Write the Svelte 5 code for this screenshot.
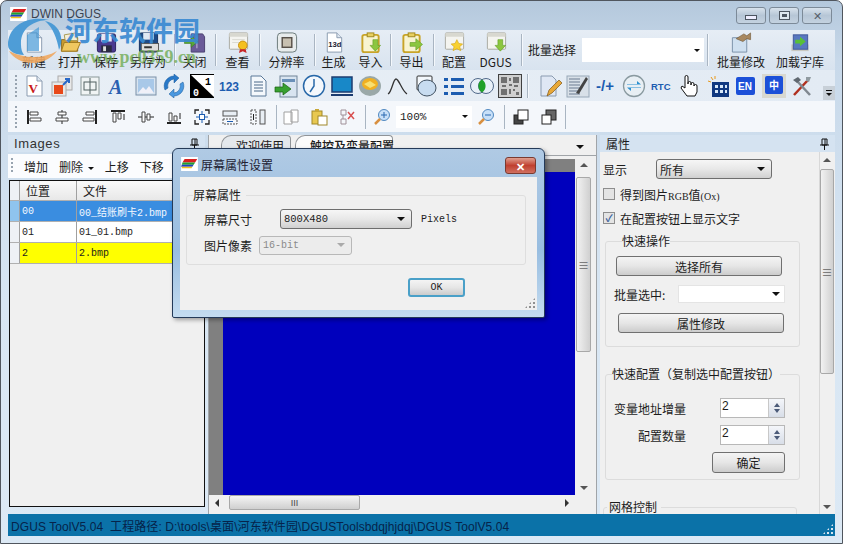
<script>
  const doc = (x = '') => `<path d="M5 2h10l5 5v15H5z" fill="#fff" stroke="#8a9bb0"/><path d="M15 2v5h5" fill="#dfe7f0" stroke="#8a9bb0"/>${x}`;
  const win = (x = '') => `<rect x="3" y="2" width="19" height="17" rx="1" fill="#f4f4f0" stroke="#a8a8a0"/><rect x="3" y="2" width="19" height="4" fill="#d8d8d0"/>${x}`;
  const clip = (x = '') => `<rect x="3" y="4" width="17" height="18" rx="2" fill="#f8f4d0" stroke="#c8a428" stroke-width="2"/><rect x="8" y="2" width="7" height="4" fill="#e8d060" stroke="#a08820"/>${x}`;
  const downArrow = '<path d="M14 9h5v6h3l-5.5 6-5.5-6h3z" fill="#8cc63f" stroke="#5a9a20" stroke-width=".6"/>';
  const lines = (x, y, n, w, c = '#8a9bb0') => Array.from({ length: n }, (_, i) => `<path d="M${x} ${y + i * 3}h${w}" stroke="${c}"/>`).join('');

  const icons = {
    new: doc(),
    open: '<path d="M3 9h7l2-2h8v14H3z" fill="#c89a30" stroke="#8a6a20"/><path d="M6 4l12-2 2 8H7z" fill="#f4f0d8" stroke="#a89850"/><path d="M3 21l3-9h17l-4 9z" fill="#f0c860" stroke="#a07a20"/>',
    save: '<rect x="3" y="3" width="19" height="19" rx="2" fill="#4a3a90" stroke="#2a2060"/><rect x="7" y="3" width="11" height="8" fill="#e8e8f4"/><rect x="7" y="15" width="11" height="7" fill="#2a2a40"/><rect x="9" y="16" width="3" height="5" fill="#ddd"/>',
    saveas: '<rect x="3" y="2" width="19" height="20" rx="2" fill="#1c4a88" stroke="#143060"/><rect x="7" y="2" width="11" height="7" fill="#dfe8f4"/><rect x="5" y="13" width="18" height="8" fill="#ddd" stroke="#555"/><path d="M8 17h8" stroke="#333" stroke-width="2"/>',
    close: '<path d="M8 3h12l2 3v16H8z" fill="#6a5a98" stroke="#4a4070"/><path d="M14 6v12" stroke="#c8c0e0"/><path d="M1 9h7V5l7 6-7 6v-4H1z" fill="#58a838" stroke="#387820" stroke-width=".6"/>',
    view: win('<path d="M6 9h13M6 12h9" stroke="#d8d8d0"/><circle cx="17" cy="15" r="4.5" fill="#f4c020" stroke="#c89010"/><path d="M14 19l-1 4 4-2 4 2-1-4z" fill="#c82828"/>'),
    res: '<rect x="2" y="2" width="20" height="20" rx="4" fill="#e8ecec" stroke="#687878"/><rect x="7" y="7" width="10" height="10" fill="#c8c0b0" stroke="#585048" stroke-width="1.5"/>',
    gen: doc('<text x="6" y="17" font-size="8" font-weight="700" font-family="Liberation Sans" fill="#223">13d</text>'),
    imp: clip(downArrow),
    exp: clip('<path d="M10 12h6V8l7 6-7 6v-4h-6z" fill="#8cc63f" stroke="#5a9a20" stroke-width=".6"/>'),
    cfg: win('<path d="M15 9l2 4 4 .5-3 3 1 4-4-2-4 2 1-4-3-3 4-.5z" fill="#f8d030" stroke="#d0a010" stroke-width=".6"/>'),
    dgus: win(downArrow),
    batch: '<path d="M3 7h15v15H3z" fill="#cfe0f0" stroke="#7a90a8"/><path d="M7 8l8-5 3 2 4-3v7l-4-1-4 3z" fill="#a88860" stroke="#685030" stroke-width=".6"/>',
    font: '<rect x="3" y="14" width="18" height="7" fill="#c8c8c0"/><rect x="5" y="4" width="15" height="15" fill="#5878c0" stroke="#405898"/><path d="M7 9h5V6l6 5-6 5v-3H7z" fill="#58c038"/>',

    vdoc: doc('<text x="6.5" y="19" font-size="13" font-weight="700" font-family="Liberation Serif" fill="#c81818">V</text>'),
    swap: '<rect x="8" y="2" width="14" height="14" fill="#e8e8e8" stroke="#aaa"/><rect x="2" y="8" width="14" height="14" fill="#e8e8e8" stroke="#aaa"/><rect x="4" y="11" width="9" height="9" fill="#e84818"/><path d="M13 11l6-6M15 5h4v4" stroke="#2868c8" stroke-width="2" fill="none"/>',
    box: '<rect x="3" y="3" width="18" height="18" fill="#f0f4f4" stroke="#8a9898"/><rect x="6" y="8" width="12" height="8" fill="none" stroke="#506060"/><path d="M12 4v16" stroke="#506060"/>',
    a: '<text x="3" y="20" font-size="20" font-weight="700" font-style="italic" font-family="Liberation Serif" fill="#2a60b0">A</text>',
    pic: '<rect x="2" y="3" width="20" height="18" fill="#d8e4f0" stroke="#7a90a8"/><rect x="4" y="5" width="16" height="14" fill="#a8c8e8"/><path d="M4 19l5-6 3 3 3-4 5 7z" fill="#f0f0f8"/>',
    refresh: '<path d="M12 2a10 10 0 0 0-9 14l3-2a7 7 0 0 1 6-9V9l5-5-5-4z" fill="#2878c8" stroke="#185898" stroke-width=".5"/><path d="M12 22a10 10 0 0 0 9-14l-3 2a7 7 0 0 1-6 9v-4l-5 5 5 4z" fill="#4a98e0" stroke="#185898" stroke-width=".5"/>',
    bits: '<rect x="0" y="0" width="24" height="24" fill="#000"/><path d="M1 1h23v22z" fill="#fff"/><text x="15" y="11" font-size="10" font-weight="700" font-family="Liberation Mono" fill="#000">1</text><text x="3" y="22" font-size="10" font-weight="700" font-family="Liberation Mono" fill="#fff">0</text>',
    n123: '<text x="1" y="17" font-size="12" font-weight="700" font-family="Liberation Sans" fill="#1c5cb0">123</text>',
    lines: `<path d="M5 2h10l5 5v15H5z" fill="#f4f8fc" stroke="#5a7898"/>${lines(8, 8, 4, 9, '#4a6888')}`,
    docarrow: '<rect x="6" y="2" width="17" height="21" fill="#d8e4f0" stroke="#708498"/><rect x="8" y="5" width="13" height="3" fill="#6a90b8"/><path d="M1 13h8V9l8 6-8 6v-3H1z" fill="#38a030" stroke="#186010" stroke-width=".7"/>',
    clock: '<circle cx="12" cy="12" r="10.5" fill="#f4f8fc" stroke="#2868a8" stroke-width="1.5"/><path d="M12 5v7l-4 6" fill="none" stroke="#2868a8" stroke-width="1.5"/>',
    monitor: '<rect x="2" y="3" width="20" height="15" fill="#1888c8" stroke="#1c3c70" stroke-width="1.5"/><path d="M1 21h22" stroke="#1c3c70" stroke-width="2"/>',
    orb: '<ellipse cx="12" cy="12" rx="11" ry="10" fill="#9aa8a8"/><ellipse cx="12" cy="10" rx="8" ry="6" fill="#f0b020"/><path d="M6 10l6-3 6 4-6 3z" fill="#f8e070"/>',
    curve: '<path d="M2 20C6 18 7 5 10 5s6 12 11 15" fill="none" stroke="#333" stroke-width="1.3"/>',
    shape: '<rect x="3" y="2" width="15" height="14" rx="1" fill="#f4f8fc" stroke="#333"/><ellipse cx="13" cy="14" rx="9" ry="8" fill="#c8dcf0" stroke="#405060"/>',
    list: '<path d="M2 4h4v3H2zM2 11h4v3H2zM2 18h4v3H2zM9 4h13v3H9zM9 11h13v3H9zM9 18h13v3H9z" fill="#1c5cb0"/>',
    venn: '<circle cx="8" cy="12" r="7.5" fill="#e8f0f8" stroke="#506888"/><circle cx="16" cy="12" r="7.5" fill="#e8f0f8" stroke="#506888"/><path d="M12 5.600a7.500 7.500 0 0 1 0 12.800 7.500 7.500 0 0 1 0-12.800z" fill="#20a028"/>',
    qr: '<rect x="0" y="0" width="24" height="24" fill="#d0d0d0" stroke="#404040" stroke-width="2"/><path d="M3 3h6v6H3zM15 3h6v6h-6zM3 15h6v6H3zM11 4h2v3h-2zM11 10h3v2h-3zM16 11h4v2h-4zM4 11h4v2H4zM11 15h2v5h-2zM15 15h2v2h-2zM18 18h3v3h-3z" fill="#707070"/>',
    penDoc: '<path d="M3 2h11l4 4v16H3z" fill="#dfe7f4" stroke="#8a9bb0"/><path d="M9 22l2-6L21 6l3 3-10 10z" fill="#e8a838" stroke="#805818" stroke-width=".7"/>',
    check: `<rect x="1" y="2" width="22" height="21" fill="#d8e0e8" stroke="#98a8b8"/>${lines(3, 5, 6, 11, '#6a7a90')}<path d="M10 19L20 3l2 2-9 15z" fill="#444"/>`,
    plus: '<text x="2" y="17" font-size="15" font-weight="700" font-family="Liberation Sans" fill="#1c5cb0">-/+</text>',
    circ: '<circle cx="12" cy="12" r="10.5" fill="#e8eff4" stroke="#8a9aa0" stroke-width="1.3"/><path d="M5 10h10V7l4 3.5H5zM19 14H9v3l-4-3.5h14z" fill="#2a90d0"/>',
    rtc: '<text x="1" y="16" font-size="9.5" font-weight="700" font-family="Liberation Sans" fill="#1c5cb0">RTC</text>',
    hand: '<path d="M9 22l-6-8 1-2 3 2V3a1.500 1.500 0 0 1 3 0v7-1a1.500 1.500 0 0 1 3 0v2-1a1.500 1.500 0 0 1 3 0v2a1.500 1.500 0 0 1 3 0v6l-2 4z" fill="#fff" stroke="#111"/>',
    grid: '<path d="M5 3l2 3M2 7l3 1M9 2v3" stroke="#e89818"/><rect x="6" y="8" width="17" height="15" fill="#103880"/><path d="M9 11h3v3H9zM14 11h3v3h-3zM19 11h2v3h-2zM9 16h3v3H9zM14 16h3v3h-3zM19 16h2v3h-2z" fill="#d8e8f8"/>',
    en: '<rect x="2" y="3" width="19" height="18" rx="2" fill="#1c50d8"/><text x="4" y="16" font-size="10" font-weight="700" font-family="Liberation Sans" fill="#fff">EN</text>',
    zh: '<rect x="0" y="0" width="24" height="24" fill="#d8d8d0"/><rect x="3" y="2" width="18" height="18" rx="2" fill="#1c50d8"/><text x="7" y="15" font-size="10" font-weight="700" font-family="Noto Sans CJK SC" fill="#fff">中</text>',
    tools: '<path d="M4 21L18 6" stroke="#b03020" stroke-width="2.5"/><path d="M20 21L7 7" stroke="#808890" stroke-width="2.5"/><path d="M3 6l5-3 3 3-4 3z" fill="#606870"/><path d="M16 3h5l-2 5-3-1z" fill="#909aa0"/>',

    alignL: '<path d="M3 2v14" stroke="#222" stroke-width="2"/><path d="M5 4h8v3H5zM5 10h11v3H5z" fill="#fff" stroke="#444"/>',
    alignC: '<path d="M9 2v14" stroke="#222"/><path d="M5 4h8v3H5zM3 10h12v3H3z" fill="#fff" stroke="#444"/>',
    alignR: '<path d="M15 2v14" stroke="#222" stroke-width="2"/><path d="M5 4h8v3H5zM2 10h11v3H2z" fill="#fff" stroke="#444"/>',
    alignT: '<path d="M2 3h14" stroke="#222" stroke-width="2"/><path d="M4 5h3v9H4zM9 5h3v6H9z" fill="#fff" stroke="#444"/><path d="M15 12V6" stroke="#222"/>',
    alignM: '<path d="M1 9h16" stroke="#222"/><path d="M5 4h3v10H5zM10 6h3v6h-3z" fill="#fff" stroke="#444"/>',
    alignB: '<path d="M2 15h14" stroke="#222" stroke-width="2"/><path d="M4 5h3v8H4zM9 8h3v5H9z" fill="#fff" stroke="#444"/><path d="M15 5v6" stroke="#222"/>',
    center: '<path d="M2 6V2h4M12 2h4v4M16 12v4h-4M6 16H2v-4" fill="none" stroke="#222" stroke-width="1.3"/><rect x="6.5" y="6.5" width="5" height="5" fill="#fff" stroke="#1c5cb0"/><path d="M9 3v3M9 12v3M3 9h3M12 9h3" stroke="#1c5cb0"/>',
    spreadH: '<rect x="2" y="3" width="14" height="5" fill="#e8eef4" stroke="#555"/><path d="M2 11h14v5H2z" fill="none" stroke="#555" stroke-dasharray="2 1"/><path d="M6 13.5h6" stroke="#1c5cb0"/>',
    spreadV: '<rect x="11" y="2" width="5" height="14" fill="#e8eef4" stroke="#555"/><path d="M2 2h5v14H2z" fill="none" stroke="#555" stroke-dasharray="2 1"/><path d="M4.5 6v6" stroke="#222"/>',
    copy: '<path d="M2 4h8v12H2zM9 2h7v12H9z" fill="#fff" stroke="#a0a0a0"/>',
    paste: '<rect x="2" y="3" width="10" height="13" fill="#e8c850" stroke="#a08828"/><rect x="5" y="1" width="4" height="3" fill="#c8a838"/><rect x="8" y="8" width="9" height="9" fill="#fff" stroke="#a08828"/>',
    del: '<path d="M3 2h5v5H3zM3 11h5v5H3zM5 7v4" fill="none" stroke="#a09098"/><path d="M10 4l6 7M16 4l-6 7" stroke="#d85050" stroke-width="1.5"/>',
    zoomIn: '<circle cx="11" cy="7" r="5.5" fill="#c8e0f8" stroke="#5088c0"/><path d="M8 7h6M11 4v6" stroke="#2868b0"/><path d="M7 11l-5 5" stroke="#d89040" stroke-width="2.5"/>',
    zoomOut: '<circle cx="11" cy="7" r="5.5" fill="#c8e0f8" stroke="#5088c0"/><path d="M8 7h6" stroke="#2868b0"/><path d="M7 11l-5 5" stroke="#d89040" stroke-width="2.5"/>',
    front: '<rect x="2" y="7" width="9" height="9" fill="#444" stroke="#222"/><rect x="6" y="2" width="10" height="10" fill="#fff" stroke="#222"/>',
    back: '<rect x="6" y="2" width="10" height="10" fill="#666" stroke="#222"/><rect x="2" y="7" width="9" height="9" fill="#fff" stroke="#222"/>'
  };

  const logo = '<rect width="24" height="20" fill="#fff"/><path d="M5 3h18l-3 5H2z" fill="#d82020"/><path d="M2 8h18l-2 3H1z" fill="#20a030"/><path d="M1 11h17l-2 3H0z" fill="#2040c0"/><path d="M1 14h15l-1 2H1z" fill="#f0c020"/>';

  const row1a = [
    ['新建', 'new', 36], ['打开', 'open', 36], ['保存', 'save', 36], ['另存为', 'saveas', 48], 3,
    ['关闭', 'close', 37], 3, ['查看', 'view', 41], 1, ['分辨率', 'res', 53], 1, ['生成', 'gen', 37], ['导入', 'imp', 37], 2,
    ['导出', 'exp', 39], 3, ['配置', 'cfg', 38], ['DGUS', 'dgus', 45], 6
  ];
  const row2a = ['vdoc', 'swap', 'box', 'a', 'pic', 'refresh', 'bits', 'n123', 'lines', 'docarrow', 'clock', 'monitor', 'orb', 'curve', 'shape', 'list', 'venn', 'qr'];
  const row2b = ['penDoc', 'check', 'plus', 'circ', 'rtc', 'hand', 'grid', 'en', 'zh', 'tools'];
  const row3a = ['alignL', 'alignC', 'alignR', 'alignT', 'alignM', 'alignB', 'center', 'spreadH', 'spreadV'];
  const row3b = ['copy', 'paste', 'del'];

  const rows = [
    { pos: '00', file: '00_结账刷卡2.bmp', cls: 'sel' },
    { pos: '01', file: '01_01.bmp', cls: 'plain' },
    { pos: '2', file: '2.bmp', cls: 'warn' }
  ];
</script>

{#snippet icon(name, size = 24)}
  <svg width={size} height={size} viewBox="0 0 {size} {size}">{@html icons[name]}</svg>
{/snippet}

{#snippet tool(name)}
  <span class="tool">{@render icon(name, 24)}</span>
{/snippet}

{#snippet small(name)}
  <span class="tool">{@render icon(name, 18)}</span>
{/snippet}

{#snippet pin()}
  <svg class="pin" width="9" height="12" viewBox="0 0 9 12"><path d="M2 1h5v6H2zM0 7h9M4.5 7v5M5 1v6" fill="none" stroke="#111"/></svg>
{/snippet}

{#snippet spin(val)}
  <div class="spin">
    <span class="spin-val">{val}</span>
    <span class="spin-btns"><i class="up"></i><i class="down"></i></span>
  </div>
{/snippet}

<div class="window">
  <header class="title">
    <svg width="17" height="14" viewBox="0 0 24 20">{@html logo}</svg>
    <span class="title-text">DWIN DGUS</span>
    <div class="controls">
      <span class="ctl"><i class="min"></i></span>
      <span class="ctl"><i class="max"></i></span>
      <span class="ctl x">✕</span>
    </div>
  </header>

  <div class="bar bar1">
    {#each row1a as it}
      {#if typeof it === 'number'}
        <span class="sep" style="margin:0 {it / 2}px"></span>
      {:else}
        <div class="big" style="width:{it[2]}px">
          {@render icon(it[1], 24)}
          <span>{it[0]}</span>
        </div>
      {/if}
    {/each}
    <span class="batch-label">批量选择</span>
    <div class="batch-combo"><i class="arrow"></i></div>
    <span class="sep" style="margin:0 3px"></span>
    <div class="big" style="width:60px">{@render icon('batch', 24)}<span>批量修改</span></div>
    <div class="big" style="width:58px">{@render icon('font', 24)}<span>加载字库</span></div>
  </div>

  <div class="bar bar2">
    <span class="grip"></span>
    {#each row2a as n}{@render tool(n)}{/each}
    <span class="sep tall m2"></span>
    {#each row2b as n}{@render tool(n)}{/each}
    <span class="chev"><i></i><i class="arrow"></i></span>
  </div>

  <div class="bar bar3">
    <span class="grip"></span>
    {#each row3a as n}{@render small(n)}{/each}
    <span class="sep tall m3"></span>
    {#each row3b as n}{@render small(n)}{/each}
    <span class="sep tall m3 pad"></span>
    {@render small('zoomIn')}
    <div class="zoom-combo"><span>100%</span><i class="arrow"></i></div>
    {@render small('zoomOut')}
    <span class="sep tall m3 pad"></span>
    {@render small('front')}
    {@render small('back')}
    <span class="sep tall end"></span>
  </div>

  <div class="body">
    <section class="pane left">
      <div class="pane-head"><span class="images">Images</span>{@render pin()}</div>
      <div class="left-tools">
        <span class="grip short"></span>
        <span>增加</span>
        <span>删除 <i class="arrow tiny"></i></span>
        <span>上移</span>
        <span>下移</span>
      </div>
      <div class="grid">
        <div class="grid-row head">
          <span class="gutter"></span><span class="pos">位置</span><span class="file">文件</span>
        </div>
        {#each rows as r}
          <div class="grid-row {r.cls}">
            <span class="gutter"></span><span class="pos">{r.pos}</span><span class="file">{r.file}</span>
          </div>
        {/each}
      </div>
    </section>

    <section class="pane center">
      <div class="tabs">
        <span class="tab">欢迎使用</span>
        <span class="tab on">触控及变量配置</span>
        <i class="arrow tab-arrow"></i>
      </div>
      <div class="stage">
        <div class="canvas-col">
          <div class="ruler"></div>
          <div class="canvas-row">
            <div class="ruler-v"></div>
            <div class="canvas"></div>
          </div>
        </div>
        <div class="vscroll">
          <i class="sa up"></i>
          <span class="thumb"><b>≡</b></span>
          <i class="sa down"></i>
        </div>
      </div>
      <div class="hscroll">
        <i class="sa left-a"></i>
        <span class="hthumb">III</span>
        <i class="sa right-a"></i>
      </div>
    </section>

    <section class="pane right">
      <div class="pane-head"><span>属性</span>{@render pin()}</div>
      <div class="props">
        <div class="props-main">
          <div class="show-row">
            <span>显示</span>
            <div class="combo show"><span>所有</span><i class="arrow"></i></div>
          </div>
          <label class="check"><span class="cb"></span><span>得到图片<em>RGB</em>值<em>(Ox)</em></span></label>
          <label class="check second"><span class="cb on">✓</span><span>在配置按钮上显示文字</span></label>

          <fieldset class="fast">
            <legend>快速操作</legend>
            <button class="btn wide">选择所有</button>
            <div class="pick-row">
              <span>批量选中:</span>
              <div class="pick"><i class="arrow"></i></div>
            </div>
            <button class="btn wide alt">属性修改</button>
          </fieldset>

          <fieldset class="quick">
            <legend>快速配置（复制选中配置按钮）</legend>
            <div class="q-row"><span>变量地址增量</span>{@render spin(2)}</div>
            <div class="q-row"><span>配置数量</span>{@render spin(2)}</div>
            <button class="btn ok">确定</button>
          </fieldset>

          <fieldset class="gridctl"><legend>网格控制</legend></fieldset>
        </div>
        <div class="vscroll prop-scroll">
          <i class="sa up"></i>
          <span class="thumb"><b>≡</b></span>
          <i class="sa down"></i>
        </div>
      </div>
    </section>
  </div>

  <footer class="status">
    <span>DGUS ToolV5.04&nbsp; 工程路径: D:\tools\桌面\河东软件园\DGUSToolsbdqjhjdqj\DGUS ToolV5.04</span>
    <span class="dots"></span>
  </footer>

  <div class="dialog">
    <div class="dlg-title">
      <svg width="17" height="14" viewBox="0 0 24 20">{@html logo}</svg>
      <span>屏幕属性设置</span>
      <span class="dlg-x">✕</span>
    </div>
    <div class="dlg-body">
      <fieldset class="dlg-group">
        <legend>屏幕属性</legend>
        <div class="dlg-row">
          <span class="dlg-label">屏幕尺寸</span>
          <div class="combo size"><span>800X480</span><i class="arrow"></i></div>
          <span class="mono">Pixels</span>
        </div>
        <div class="dlg-row depth">
          <span class="dlg-label">图片像素</span>
          <div class="combo off"><span>16-bit</span><i class="arrow"></i></div>
        </div>
      </fieldset>
      <button class="btn dlg-ok">OK</button>
      <span class="dots small-dots"></span>
    </div>
  </div>

  <div class="mark" aria-hidden="true">
    <svg class="mark-logo" width="62" height="50" viewBox="0 0 62 50">
      <path d="M3 30C3 10 24 0 44 5 28 5 15 14 16 30c0 4 1 7 3 10C10 40 3 36 3 30z" fill="#3f95d4"/>
      <path d="M4 36c8 14 34 18 48 0-14 8-32 8-48 0z" fill="#f0a860"/>
      <path d="M40 6c14 3 20 16 14 29-2-12-6-22-14-29z" fill="#3f95d4"/>
      <path d="M22 36V20l12-8v24z" fill="#3f95d4" opacity=".75"/>
    </svg>
    <span class="mark-cn">河东软件园</span>
    <span class="mark-url">www.pc0359.cn</span>
  </div>
</div>

<style>
  :global(body) {
    margin: 0;
  }

  .window {
    position: relative;
    width: 843px;
    height: 544px;
    box-sizing: border-box;
    display: flex;
    flex-direction: column;
    overflow: hidden;
    padding: 0 7px 7px;
    background: linear-gradient(#b4c8dc 0, #c8d9ea 60px, #d8e6f3 300px, #dce9f5 100%);
    border: 1px solid #50565e;
    border-radius: 7px 7px 0 0;
    font: 12px "Noto Sans CJK SC", "Liberation Sans", sans-serif;
    color: #1c1c1c;
  }

  .window i {
    display: block;
  }

  .arrow {
    width: 0;
    height: 0;
    border: 4px solid transparent;
    border-top: 4px solid #111;
    border-bottom: 0;
  }

  .title {
    height: 29px;
    flex: none;
    display: flex;
    align-items: center;
    padding: 0 0 4px 2px;
    gap: 4px;
    box-sizing: border-box;
  }

  .title-text {
    font-family: "Liberation Sans", sans-serif;
    color: #3a4350;
    font-size: 12px;
  }

  .controls {
    margin-left: auto;
    display: flex;
    gap: 3px;
    padding-right: 3px;
    margin-top: 3px;
  }

  .ctl {
    width: 30px;
    height: 17px;
    display: flex;
    align-items: center;
    justify-content: center;
    border: 1px solid #7c8a98;
    border-radius: 3px;
    box-sizing: border-box;
    background: linear-gradient(#d8e2ec, #b6c6d6 50%, #c4d2e0);
    color: #555f6a;
    font-size: 11px;
  }

  .min {
    width: 10px;
    height: 3px;
    border: 1px solid #4c5560;
    background: #eef;
    margin-top: 5px;
  }

  .max {
    width: 9px;
    height: 7px;
    border: 1px solid #4c5560;
    box-shadow: inset 0 0 0 2px #dde6ee;
    background: #4c5560;
  }

  .bar {
    flex: none;
    display: flex;
    align-items: center;
  }

  .bar1 {
    height: 40px;
    padding-left: 8px;
    background: linear-gradient(#e6edf5, #d8e3ef);
  }

  .bar2 {
    height: 31px;
    padding-left: 4px;
    margin-right: 0;
    background: linear-gradient(90deg, #e8eff6, #e3ebf4);
  }

  .bar3 {
    height: 31px;
    padding-left: 4px;
    background: #f4f7fb;
  }

  .big {
    flex: none;
    display: flex;
    flex-direction: column;
    align-items: center;
    height: 40px;
    line-height: 14px;
    white-space: nowrap;
    justify-content: space-between;
    padding: 1px 0;
    box-sizing: border-box;
  }

  .big span {
    line-height: 15px;
  }

  .sep {
    flex: none;
    width: 1px;
    height: 32px;
    background: #a9b5c2;
    box-shadow: 1px 0 #f4f8fc;
  }

  .sep.tall {
    height: 24px;
  }

  .m2 {
    margin: 0 8px 0 3px;
  }

  .m3 {
    margin: 0 0 0 4px;
  }

  .m3.pad {
    margin: 0 2px 0 4px;
  }

  .end {
    margin-left: 2px;
  }

  .grip {
    flex: none;
    width: 2px;
    height: 22px;
    margin: 0 3px 0 3px;
    background: repeating-linear-gradient(#98a4b0 0 2px, transparent 2px 4px);
  }

  .grip.short {
    height: 16px;
    margin: 0 0 0 1px;
  }

  .tool {
    flex: none;
    width: 28px;
    display: flex;
    justify-content: center;
    align-items: center;
  }

  .batch-label {
    flex: none;
    width: 56px;
    padding-left: 3px;
    box-sizing: border-box;
    margin-bottom: 2px;
    white-space: nowrap;
  }

  .batch-combo {
    flex: none;
    width: 122px;
    height: 24px;
    margin-left: 1px;
    background: #fff;
    display: flex;
    align-items: center;
    justify-content: flex-end;
    padding-right: 4px;
    box-sizing: border-box;
  }

  .batch-combo .arrow,
  .zoom-combo .arrow {
    border-width: 3px 3px 0;
  }

  .chev {
    width: 12px;
    height: 14px;
    margin: 14px 0 0 7px;
    background: #c8d0d8;
    display: flex;
    flex-direction: column;
    align-items: center;
    justify-content: center;
    gap: 2px;
  }

  .chev i:first-child {
    width: 6px;
    height: 1px;
    background: #111;
  }

  .chev .arrow {
    border-width: 3px 3px 0;
  }

  .zoom-combo {
    flex: none;
    width: 76px;
    height: 22px;
    background: #fff;
    display: flex;
    align-items: center;
    justify-content: space-between;
    font: 11px "Liberation Mono", monospace;
    padding: 0 4px;
    box-sizing: border-box;
  }

  .body {
    flex: 1;
    min-height: 0;
    display: flex;
    gap: 3px;
    padding-top: 3px;
  }

  .pane {
    flex: none;
    height: 100%;
    box-sizing: border-box;
    display: flex;
    flex-direction: column;
    overflow: hidden;
  }

  .left {
    width: 197px;
  }

  .center {
    width: 389px;
    background: #f0f0f0;
    border: 1px solid #a0a4a8;
    border-bottom: 0;
    border-top: 0;
  }

  .right {
    width: 235px;
  }

  .pane-head {
    flex: none;
    height: 17px;
    display: flex;
    align-items: center;
    justify-content: space-between;
    padding: 0 6px;
    background: #d5e3f1;
    line-height: 17px;
  }

  .images {
    font: 13px "Liberation Sans", sans-serif;
    letter-spacing: 0.6px;
    color: #333;
  }

  .left-tools {
    flex: none;
    margin-top: 2px;
    height: 24px;
    background: #fbfcfe;
    display: flex;
    align-items: center;
    gap: 11px;
    padding-left: 2px;
    white-space: nowrap;
    overflow: hidden;
  }

  .tiny {
    display: inline-block !important;
    border-width: 3px 3px 0;
    vertical-align: middle;
    margin-left: 2px;
  }

  .grid {
    flex: 1;
    min-height: 0;
    margin: 2px 0 7px 1px;
    box-sizing: border-box;
    background: #f0f0f0;
    border: 1px solid #111;
    overflow: hidden;
  }

  .grid-row {
    display: flex;
    height: 21px;
    align-items: center;
    font: 10px "Liberation Mono", "Noto Sans CJK SC", monospace;
    border-bottom: 1px solid #b0b0b0;
    box-sizing: border-box;
    background: #fff;
  }

  .grid-row span {
    height: 100%;
    display: flex;
    align-items: center;
    box-sizing: border-box;
    border-right: 1px solid #a0a0a0;
    white-space: nowrap;
    overflow: hidden;
  }

  .gutter {
    width: 10px;
    flex: none;
    background: #eef1f5;
  }

  .pos {
    width: 57px;
    flex: none;
    padding-left: 2px;
  }

  .file {
    flex: 1;
    padding-left: 2px;
  }

  .grid-row.head {
    height: 20px;
    font: 12px "Noto Sans CJK SC", sans-serif;
    background: linear-gradient(#fafafa, #e8e8e8);
  }

  .head .pos,
  .head .file {
    padding-left: 6px;
  }

  .grid-row.sel {
    background: #3a8de0;
    color: #f4f8ff;
  }

  .sel .gutter {
    background: #8fc4ee;
  }

  .grid-row.warn {
    background: #ffff00;
  }

  .tabs {
    flex: none;
    position: relative;
    height: 21px;
    display: flex;
    align-items: flex-end;
    padding-left: 12px;
    gap: 4px;
    border-bottom: 1px solid #a0a4a8;
    background: #f0f0f0;
    box-sizing: border-box;
  }

  .tab {
    height: 19px;
    padding: 0 8px 0 14px;
    border: 1px solid #909498;
    border-bottom: 0;
    border-radius: 10px 4px 0 0;
    background: #e4e8ec;
    line-height: 20px;
    white-space: nowrap;
    width: 46px;
  }

  .tab.on {
    background: #fbfbfb;
    width: 74px;
    font-weight: 500;
  }

  .tab-arrow {
    position: absolute;
    right: 12px;
    top: 10px;
  }

  .stage {
    flex: 1;
    min-height: 0;
    display: flex;
    padding-top: 3px;
  }

  .canvas-col {
    flex: 1;
    display: flex;
    flex-direction: column;
  }

  .ruler {
    height: 13px;
    flex: none;
    background: #808080;
  }

  .canvas-row {
    flex: 1;
    display: flex;
  }

  .ruler-v {
    width: 14px;
    background: #808080;
  }

  .canvas {
    flex: 1;
    background: #0000bd;
  }

  .vscroll {
    flex: none;
    width: 17px;
    margin-right: 4px;
    background: #f0f0f0;
    display: flex;
    flex-direction: column;
    align-items: center;
    position: relative;
  }

  .thumb {
    width: 15px;
    height: 175px;
    margin-top: 10px;
    display: flex;
    align-items: center;
    justify-content: center;
    background: linear-gradient(90deg, #f2f2f2, #d0d0d0);
    border: 1px solid #a8a8a8;
    border-radius: 2px;
    box-sizing: border-box;
    color: #666;
  }

  .thumb b {
    font-weight: 400;
    font-size: 11px;
  }

  .sa {
    width: 0;
    height: 0;
    border: 4px solid transparent;
  }

  .sa.up {
    border-bottom: 4px solid #555;
    border-top: 0;
    margin-top: 4px;
  }

  .sa.down {
    border-top: 4px solid #555;
    border-bottom: 0;
    margin-top: auto;
    margin-bottom: 5px;
  }

  .hscroll {
    flex: none;
    height: 19px;
    box-sizing: border-box;
    display: flex;
    align-items: center;
    background: #f0f0f0;
    padding: 0 0 4px 6px;
  }

  .left-a {
    border-right: 4px solid #333;
    border-left: 0;
  }

  .right-a {
    border-left: 4px solid #333;
    border-right: 0;
    margin-left: 205px;
  }

  .hthumb {
    width: 131px;
    height: 15px;
    margin-left: 10px;
    text-align: center;
    font: 9px/14px "Liberation Sans", sans-serif;
    color: #444;
    background: linear-gradient(#f4f4f4, #cfcfcf);
    border: 1px solid #a8a8a8;
    border-radius: 2px;
    box-sizing: border-box;
  }

  .props {
    flex: 1;
    min-height: 0;
    display: flex;
    background: #f0f0f0;
    overflow: hidden;
  }

  .props-main {
    flex: 1;
    min-width: 0;
    padding: 7px 0 0 3px;
  }

  .prop-scroll {
    width: 15px;
    margin-right: 1px;
    border-left: 1px solid #d8d8d8;
    box-sizing: border-box;
  }

  .prop-scroll .sa.up {
    margin-top: 6px;
  }

  .prop-scroll .thumb {
    width: 14px;
    height: 205px;
    margin-top: 7px;
  }

  .show-row {
    display: flex;
    align-items: center;
    gap: 29px;
    height: 20px;
  }

  .combo {
    height: 20px;
    box-sizing: border-box;
    display: flex;
    align-items: center;
    justify-content: space-between;
    padding: 0 6px 0 3px;
    border: 1px solid #6e6e6e;
    border-radius: 3px;
    background: linear-gradient(#f6f6f6, #e8e8e8 50%, #d0d0d0);
  }

  .show {
    width: 116px;
  }

  .check {
    display: flex;
    align-items: center;
    gap: 5px;
    margin-top: 5px;
    height: 20px;
  }

  .check.second {
    margin-top: 4px;
  }

  .check em {
    font: 10px "Liberation Serif", serif;
  }

  .cb {
    width: 12px;
    height: 12px;
    flex: none;
    box-sizing: border-box;
    border: 1px solid #8e8e8e;
    background: #e4e4e4;
    font-size: 10px;
    line-height: 10px;
    text-align: center;
    color: #3a5f9a;
    font-weight: 700;
  }

  fieldset {
    margin: 0;
    min-width: 0;
    box-sizing: border-box;
    border: 1px solid #dcdcdc;
    border-radius: 3px;
    padding: 0;
  }

  legend {
    padding: 0 0 0 0;
    margin-left: 6px;
    line-height: 14px;
    background: #f0f0f0;
  }

  .fast {
    width: 195px;
    height: 113px;
    margin: 6px 0 0 2px;
    padding: 8px 0 0 10px;
  }

  .btn {
    display: block;
    box-sizing: border-box;
    font: inherit;
    color: inherit;
    padding: 0;
    height: 20px;
    border: 1px solid #707070;
    border-radius: 3px;
    background: linear-gradient(#f4f4f4, #e6e6e6 50%, #cccccc);
  }

  .wide {
    width: 166px;
  }

  .alt {
    margin: 10px 0 0 2px;
  }

  .pick-row {
    display: flex;
    align-items: center;
    height: 18px;
    margin-top: 9px;
    gap: 13px;
    margin-left: -2px;
  }

  .pick {
    width: 107px;
    height: 18px;
    background: #fff;
    display: flex;
    align-items: center;
    justify-content: flex-end;
    padding-right: 4px;
    box-sizing: border-box;
    border: 1px solid #e4e4e4;
  }

  .quick {
    width: 195px;
    height: 113px;
    margin: 20px 0 0 2px;
    padding: 17px 14px 0 0;
  }

  .q-row {
    display: flex;
    justify-content: flex-end;
    align-items: center;
    gap: 34px;
    margin-bottom: 7px;
    height: 20px;
  }

  .q-row span:first-child {
    white-space: nowrap;
  }

  .spin {
    width: 65px;
    height: 20px;
    border: 1px solid #b8b8b8;
    background: #fff;
    box-sizing: border-box;
    display: flex;
    justify-content: space-between;
    font: 12px "Liberation Sans", sans-serif;
  }

  .spin-val {
    padding-left: 1px;
    line-height: 14px;
  }

  .spin-btns {
    width: 15px;
    display: flex;
    flex-direction: column;
    justify-content: center;
    align-items: center;
    gap: 2px;
    background: linear-gradient(#f4f6fa, #d8dee8);
    border-left: 1px solid #c8c8c8;
  }

  .spin-btns .up {
    border: 3px solid transparent;
    border-bottom: 4px solid #4a5a78;
    border-top: 0;
  }

  .spin-btns .down {
    border: 3px solid transparent;
    border-top: 4px solid #4a5a78;
    border-bottom: 0;
  }

  .ok {
    width: 73px;
    height: 21px;
    margin: 1px 0 0 auto;
  }

  .gridctl {
    width: 194px;
    height: 30px;
    margin: 20px 0 0 0;
  }

  .gridctl legend {
    margin-left: 3px;
    padding: 0 4px 0 2px;
  }

  .status {
    flex: none;
    height: 22px;
    display: flex;
    align-items: center;
    justify-content: space-between;
    padding-left: 3px;
    background: #0b72a8;
    color: #06234a;
    font-family: "Liberation Sans", "Noto Sans CJK SC", sans-serif;
    font-size: 12px;
    letter-spacing: 0.08px;
    white-space: nowrap;
  }

  .dots {
    width: 12px;
    height: 12px;
    margin: 8px 1px 0 0;
    flex: none;
    background: radial-gradient(circle, #d8e6f0 1px, transparent 1.2px) 0 0 / 4px 4px;
    clip-path: polygon(100% 0, 100% 100%, 0 100%);
  }

  .dialog {
    position: absolute;
    left: 171px;
    top: 147px;
    width: 373px;
    height: 170px;
    box-sizing: border-box;
    padding: 0 7px 7px;
    display: flex;
    flex-direction: column;
    border: 1px solid #243a58;
    border-radius: 6px 6px 2px 2px;
    background: linear-gradient(#b0cae4, #98bde0 60%, #c4dcf0);
    box-shadow: 2px 2px 4px rgba(0, 0, 0, 0.35);
  }

  .dlg-title {
    flex: none;
    height: 28px;
    display: flex;
    align-items: center;
    gap: 3px;
    padding: 2px 0 0 1px;
    box-sizing: border-box;
    position: relative;
    color: #223;
  }

  .dlg-x {
    position: absolute;
    right: 1px;
    top: 8px;
    width: 31px;
    height: 17px;
    display: flex;
    align-items: center;
    justify-content: center;
    color: #fff;
    font-size: 11px;
    font-weight: 700;
    border: 1px solid #7a3a30;
    border-radius: 3px;
    box-sizing: border-box;
    background: linear-gradient(#e0a090, #c04030 50%, #d07060);
  }

  .dlg-body {
    flex: 1;
    min-height: 0;
    position: relative;
    background: #f0f0f0;
    padding: 11px 11px 0 6px;
  }

  .dlg-group {
    height: 77px;
    padding: 7px 0 0 17px;
    border-color: #dedede;
  }

  .dlg-group legend {
    margin-left: -11px;
    padding: 0 5px 0 0;
  }

  .dlg-row {
    display: flex;
    align-items: center;
    height: 20px;
  }

  .dlg-row.depth {
    margin-top: 6px;
  }

  .dlg-label {
    width: 55px;
    flex: none;
    white-space: nowrap;
  }

  .size {
    width: 132px;
    margin-left: 21px;
    font: 10.5px "Liberation Mono", monospace;
  }

  .mono {
    margin-left: 9px;
    font: 10px "Liberation Mono", monospace;
    letter-spacing: 0;
  }

  .off {
    width: 93px;
    height: 19px;
    font: 10px "Liberation Mono", monospace;
    color: #8a8a8a;
    background: #ececec;
    border-color: #b8b8b8;
  }

  .off .arrow {
    border-top-color: #aaa;
  }

  .size .arrow {
    border-width: 4px 4px 0;
  }

  .dlg-ok {
    position: absolute;
    left: 228px;
    top: 101px;
    width: 57px;
    height: 19px;
    border: 2px solid #4aa0c8;
    font: 10px "Liberation Mono", monospace;
  }

  .small-dots {
    position: absolute;
    right: 1px;
    bottom: 1px;
    margin: 0;
    background-image: radial-gradient(circle, #909090 1px, transparent 1.2px);
  }

  .mark {
    position: absolute;
    left: 0;
    top: 0;
    width: 210px;
    height: 70px;
    pointer-events: none;
  }

  .mark-logo {
    position: absolute;
    left: 4px;
    top: 14px;
    opacity: 0.9;
  }

  .mark-cn {
    position: absolute;
    left: 64px;
    top: 11px;
    font: 700 27px/36px "Noto Sans CJK SC", sans-serif;
    color: #3a8ad2;
    opacity: 0.92;
    white-space: nowrap;
  }

  .mark-url {
    position: absolute;
    left: 76px;
    top: 47px;
    font: 700 18px/18px "Liberation Serif", serif;
    color: #6aa84a;
    opacity: 0.75;
    white-space: nowrap;
  }
</style>
